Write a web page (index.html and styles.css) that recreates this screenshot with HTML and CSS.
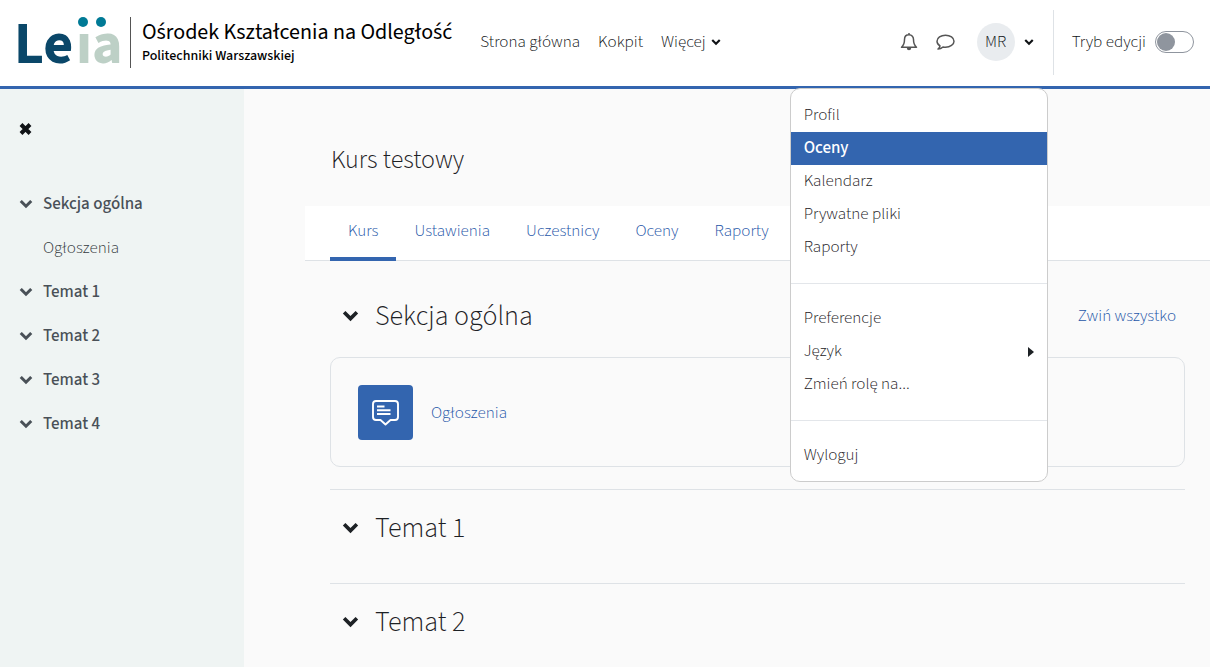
FILE: index.html
```html
<!DOCTYPE html>
<html lang="pl">
<head>
<meta charset="utf-8">
<meta name="viewport" content="width=device-width, initial-scale=1">
<title>Kurs testowy</title>
<link rel="stylesheet" href="styles.css">
</head>
<body>
<svg class="defs" aria-hidden="true">
  <symbol id="chevron" viewBox="0 0 16 10"><path d="M2 1l6 6 6-6" fill="none" stroke="currentColor" stroke-width="3.400"/></symbol>
</svg>
<header class="topbar">
  <a class="brand" href="#">
    <svg class="logo" viewBox="0 0 104 54" role="img" aria-label="Leia">
      <text class="logo-dark" x="-3" y="48">Le</text>
      <text class="logo-light" x="59" y="48">ıa</text>
      <circle cx="66" cy="7" r="5"/><circle cx="84" cy="7" r="5"/>
    </svg>
    <span class="brand-text"><span class="brand-name">Ośrodek Kształcenia na Odległość</span><span class="brand-sub">Politechniki Warszawskiej</span></span>
  </a>
  <nav class="mainnav">
    <a href="#">Strona główna</a>
    <a href="#">Kokpit</a>
    <a href="#" class="more">Więcej <svg class="chev-s"><use href="#chevron"/></svg></a>
  </nav>
  <div class="tools">
    <button class="iconbtn" aria-label="Powiadomienia"><svg width="18" height="20" viewBox="0 0 18 20"><path d="M9 1v2M9 2.8C6 2.8 4.500 5 4.500 7.500C4.500 11.500 3.500 13.500 1.500 15.200H16.500C14.500 13.500 13.500 11.500 13.500 7.500C13.500 5 12 2.800 9 2.800Z" fill="none" stroke="currentColor" stroke-width="1.500" stroke-linejoin="round"/><path d="M6.800 16h4.400a2.200 2.200 0 0 1-4.400 0z" fill="currentColor"/></svg></button>
    <button class="iconbtn" aria-label="Wiadomości"><svg width="20" height="18" viewBox="0 0 20 18"><path d="M10.500 2.200C5.800 2.200 2 4.800 2 8.200c0 1.900 1.200 3.500 3 4.600c-.2 1.300-.9 2.300-2 3.200c2 0 3.700-.8 5-2c.8.200 1.600.2 2.500.2c4.700 0 8.500-2.600 8.500-6S15.200 2.200 10.500 2.200z" fill="none" stroke="currentColor" stroke-width="1.500" stroke-linejoin="round"/></svg></button>
    <div class="usermenu">
      <button class="userbtn" aria-expanded="true"><span class="avatar">MR</span><svg class="chev-s"><use href="#chevron"/></svg></button>
      <div class="menu">
        <a href="#">Profil</a>
        <a href="#" class="active">Oceny</a>
        <a href="#">Kalendarz</a>
        <a href="#">Prywatne pliki</a>
        <a href="#">Raporty</a>
        <hr>
        <a href="#">Preferencje</a>
        <a href="#" class="sub">Język <svg width="6" height="10" viewBox="0 0 6 10"><path d="M0 0l6 5-6 5z" fill="currentColor"/></svg></a>
        <a href="#">Zmień rolę na...</a>
        <hr>
        <a href="#">Wyloguj</a>
      </div>
    </div>
    <label class="editmode"><span>Tryb edycji</span><input type="checkbox" role="switch"></label>
  </div>
</header>
<div class="page">
  <aside class="sidebar">
    <button class="close" aria-label="Zamknij"><svg width="14" height="12" viewBox="0 0 14 12"><path d="M2 1.500l9 9M11 1.500l-9 9" stroke="currentColor" stroke-width="4"/></svg></button>
    <nav class="index">
      <a href="#"><svg class="chev-m"><use href="#chevron"/></svg>Sekcja ogólna</a>
      <a href="#" class="leaf">Ogłoszenia</a>
      <a href="#"><svg class="chev-m"><use href="#chevron"/></svg>Temat 1</a>
      <a href="#"><svg class="chev-m"><use href="#chevron"/></svg>Temat 2</a>
      <a href="#"><svg class="chev-m"><use href="#chevron"/></svg>Temat 3</a>
      <a href="#"><svg class="chev-m"><use href="#chevron"/></svg>Temat 4</a>
    </nav>
  </aside>
  <main class="main">
    <h1>Kurs testowy</h1>
    <nav class="tabs">
      <a href="#" class="current">Kurs</a>
      <a href="#">Ustawienia</a>
      <a href="#">Uczestnicy</a>
      <a href="#">Oceny</a>
      <a href="#">Raporty</a>
    </nav>
    <div class="sections">
      <section>
        <div class="head"><h2><svg class="chev-l"><use href="#chevron"/></svg>Sekcja ogólna</h2><a href="#">Zwiń wszystko</a></div>
        <div class="card">
          <span class="tile"><svg width="28" height="28" viewBox="0 0 28 28" fill="none" stroke="#fff" stroke-width="1.900"><path d="M4 2h19q3 0 3 3v13q0 3-3 3h-4.500l-5 4.500-5-4.500H4q-3 0-3-3V5q0-3 3-3z" stroke-linejoin="round"/><path d="M5 7.500h7.500M5 11.300h13.500M5 15h13.500"/></svg></span>
          <a href="#">Ogłoszenia</a>
        </div>
      </section>
      <section class="topic"><h2><svg class="chev-l"><use href="#chevron"/></svg>Temat 1</h2></section>
      <section class="topic"><h2><svg class="chev-l"><use href="#chevron"/></svg>Temat 2</h2></section>
    </div>
  </main>
</div>
</body>
</html>
```
FILE: styles.css
```css
* { box-sizing: border-box; }
body {
  margin: 0;
  min-height: 100vh;
  display: flex;
  flex-direction: column;
  background: #fafafa;
  color: #101316;
  font: 300 17px/24px "Source Sans 3", "Source Sans Pro", "Noto Sans CJK SC", "Noto Sans", sans-serif;
}
a { color: #1f56a8; text-decoration: none; }
button { border: 0; padding: 0; background: none; font: inherit; color: inherit; }
svg { display: block; flex: none; }
.defs { position: absolute; width: 0; height: 0; }
.chev-s { width: 10px; height: 7px; }
.chev-m { width: 14px; height: 9px; }
.chev-l { width: 17px; height: 11px; }

.topbar {
  display: flex;
  align-items: center;
  height: 89px;
  padding: 0 16px 2px 17px;
  border-bottom: 3px solid #3365af;
  background: #fff;
}
.brand { display: flex; align-items: center; gap: 9px; color: #000; }
.logo { width: 104px; height: 54px; overflow: visible; fill: #007a96; }
.logo text { font-size: 58px; font-weight: 700; }
.logo-dark { fill: #0a4769; }
.logo-light { fill: #bdd0c6; }
.brand-text {
  display: flex;
  flex-direction: column;
  padding: 1px 0 2px 11px;
  border-left: 1px solid #555;
  white-space: nowrap;
}
.brand-name { font-size: 22px; line-height: 28px; font-weight: 400; }
.brand-sub { font-size: 14px; line-height: 20px; font-weight: 500; }
.mainnav { display: flex; gap: 18px; margin-left: 28px; white-space: nowrap; }
.mainnav a { color: #101316; }
.more { display: flex; align-items: center; gap: 5px; }
.tools { display: flex; align-items: center; margin-left: auto; white-space: nowrap; }
.iconbtn { width: 36px; display: flex; justify-content: center; color: #555; }
.usermenu { position: relative; margin-left: 14px; padding-right: 19px; }
.userbtn { display: flex; align-items: center; gap: 9px; }
.avatar {
  width: 38px;
  height: 38px;
  border-radius: 50%;
  background: #e9ecef;
  line-height: 38px;
}
.menu {
  position: absolute;
  top: 65px;
  right: 5px;
  width: 258px;
  padding: 10px 0 9px;
  border: 1px solid #ccc;
  border-radius: 10px;
  background: #fff;
}
.menu a { display: block; padding: 0 13px; line-height: 33px; color: #1d2125; }
.menu .active { background: #3365af; color: #fff; font-weight: 500; }
.menu .sub { display: flex; align-items: center; justify-content: space-between; }
.menu hr { margin: 19px 0 18px; border: 0; border-top: 1px solid #e3e6ea; }
.editmode {
  display: flex;
  align-items: center;
  gap: 9px;
  height: 65px;
  padding-left: 18px;
  border-left: 1px solid #dee2e6;
}
.editmode input {
  appearance: none;
  width: 39px;
  height: 22px;
  margin: 0;
  padding: 1px;
  border: 1px solid #8f959e;
  border-radius: 11px;
}
.editmode input::before {
  content: "";
  display: block;
  width: 18px;
  height: 18px;
  border-radius: 50%;
  background: #8f959e;
}

.page { flex: 1; display: flex; }
.sidebar { width: 244px; flex: none; padding: 34px 19px; background: #eff4f3; }
.close { display: flex; }
.index { display: flex; flex-direction: column; gap: 20px; margin-top: 57px; }
.index a {
  display: flex;
  align-items: center;
  gap: 10px;
  color: #495057;
  font-weight: 500;
}
.index .leaf { padding-left: 24px; font-weight: 300; color: #343a40; }

.main { flex: 1; padding-left: 61px; }
h1, h2 { margin: 0; font-weight: 300; color: #1d2125; }
h1 { padding: 55px 26px 30px; font-size: 26px; line-height: 32px; }
.tabs {
  display: flex;
  padding: 0 25px;
  background: #fff;
  border-bottom: 1px solid #dee2e6;
}
.tabs a { padding: 13px 18px 14px; margin-bottom: -1px; border-bottom: 4px solid transparent; }
.tabs .current { border-color: #3365af; }
.sections { padding: 36px 25px 0; }
.head { display: flex; align-items: center; justify-content: space-between; padding-right: 9px; }
h2 { display: flex; align-items: center; gap: 16px; padding-left: 12px; font-size: 28px; line-height: 38px; }
.card {
  display: flex;
  align-items: center;
  gap: 18px;
  margin: 22px 0;
  padding: 27px 27px 26px;
  border: 1px solid #dee2e6;
  border-radius: 10px;
}
.tile {
  display: grid;
  place-items: center;
  width: 55px;
  height: 55px;
  border-radius: 4px;
  background: #3365af;
}
.topic { padding: 19px 0 36px; border-top: 1px solid #dee2e6; }
.topic:last-child { padding-bottom: 0; }
```
